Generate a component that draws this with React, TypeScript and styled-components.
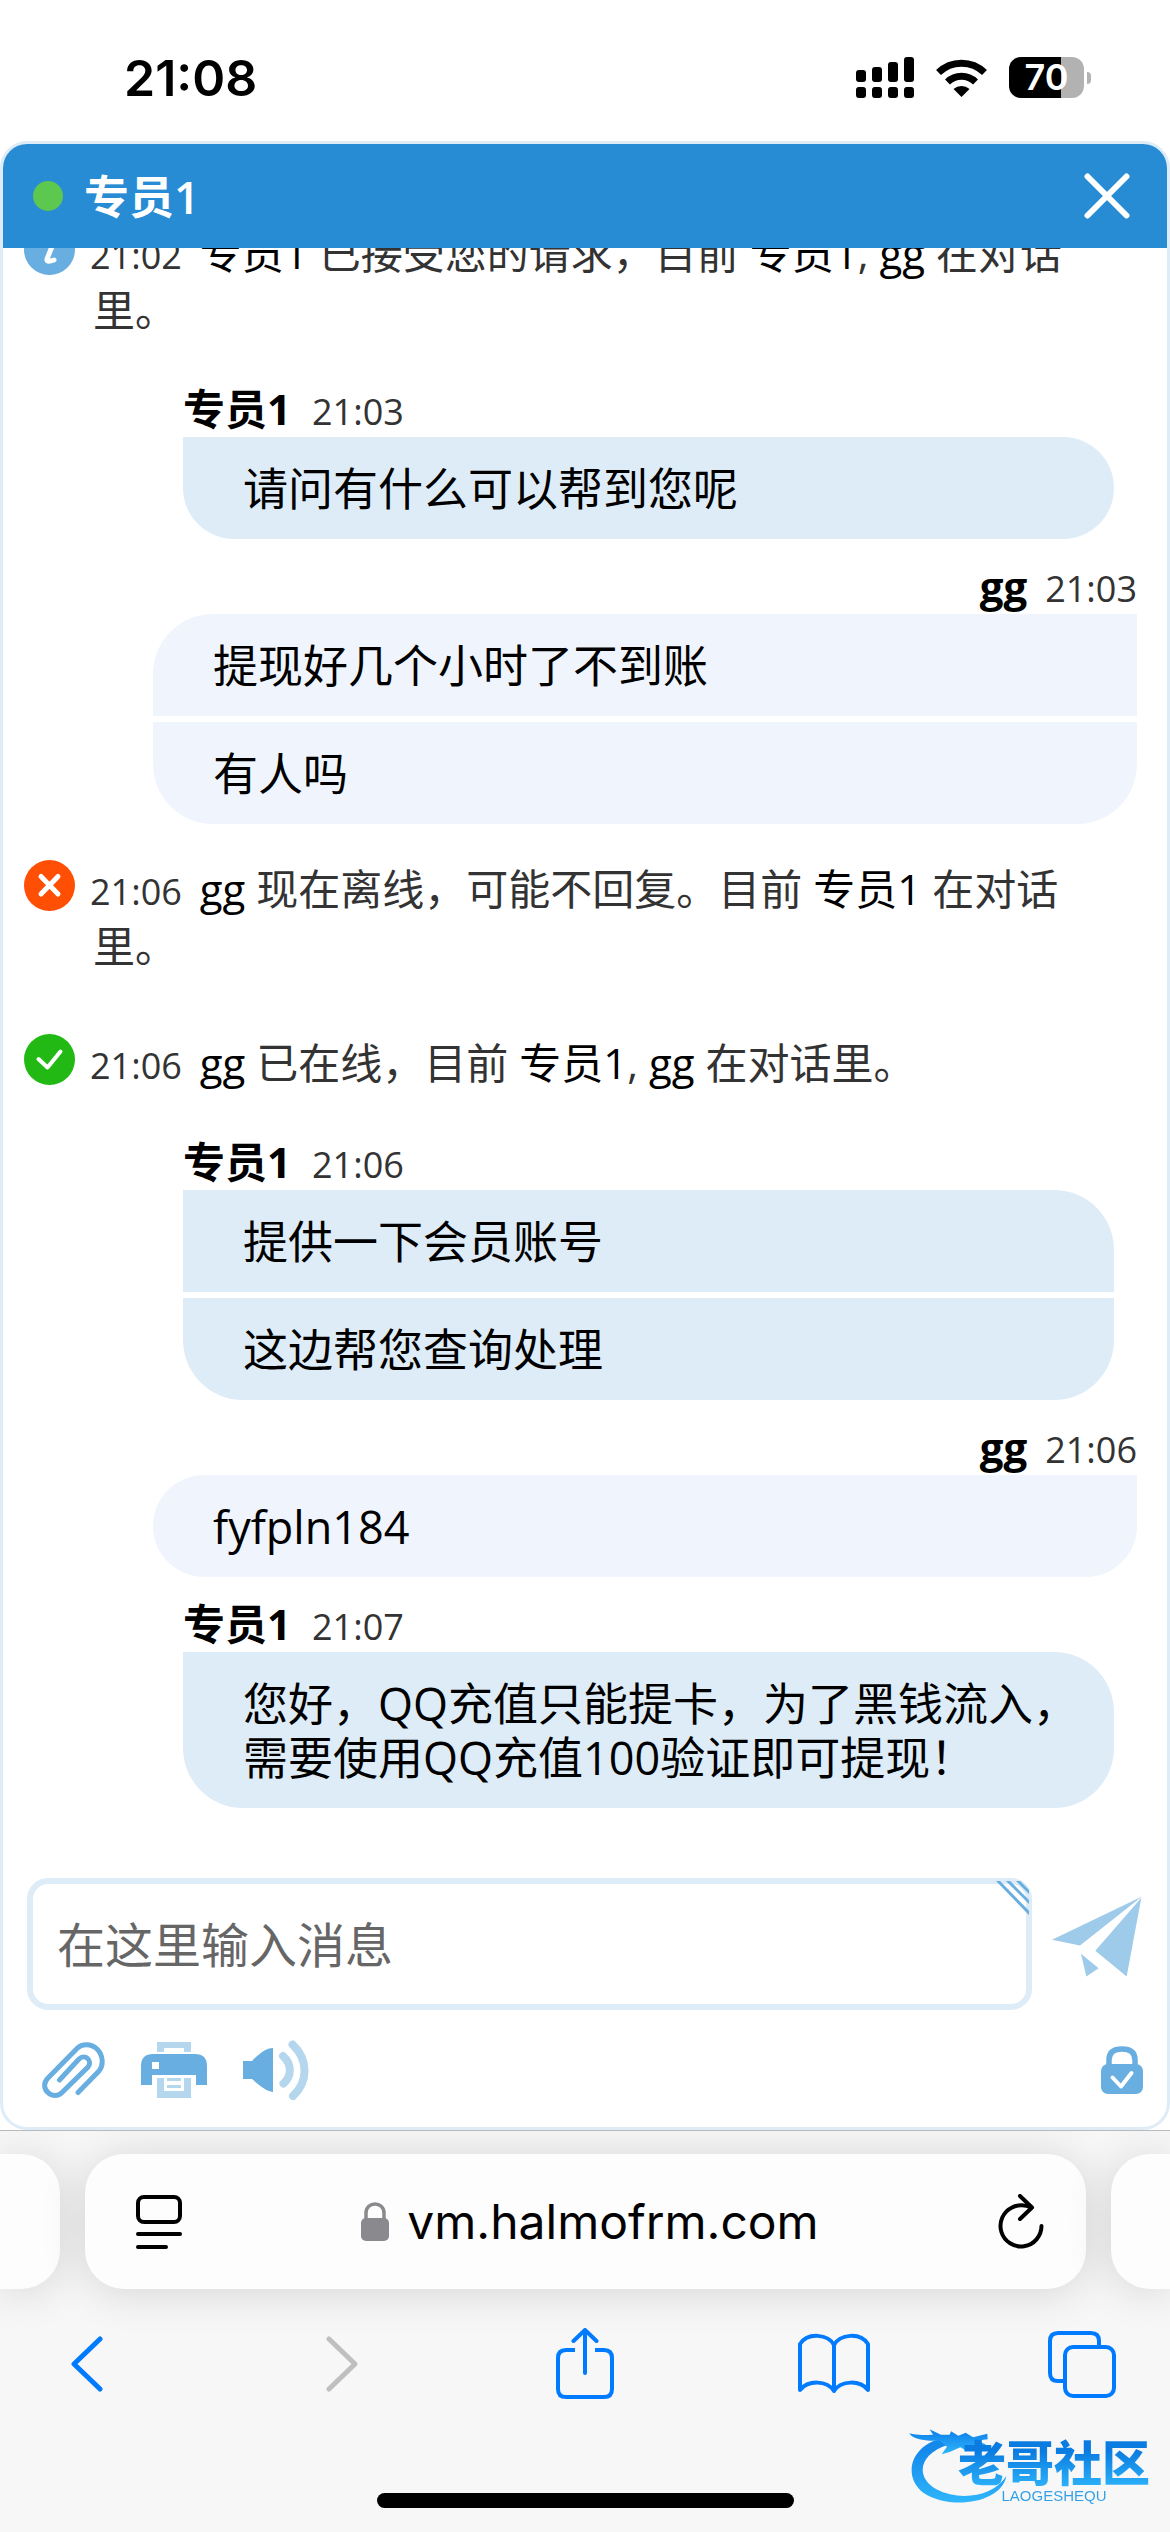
import React from "react";
import styled, { createGlobalStyle } from "styled-components";

const chatFont = `"Open Sans", "Noto Sans CJK SC", sans-serif`;
const systemFont = `Inter, "Noto Sans CJK SC", sans-serif`;

const GlobalStyle = createGlobalStyle`
  *, *::before, *::after { box-sizing: border-box; }
  body { margin: 0; background: #fff; font-family: ${chatFont}; }
  button, input { font: inherit; color: inherit; }
  svg { display: block; flex: none; }
`;

const Screen = styled.div`
  position: relative;
  display: flex;
  flex-direction: column;
  height: 100vh;
  overflow: hidden;
`;

/* Status bar */

const StatusBar = styled.header`
  display: flex;
  flex: none;
  align-items: center;
  justify-content: space-between;
  height: 141px;
  padding: 14px 79px 0 124px;
  font-family: ${systemFont};
`;

const Clock = styled.time`
  font-size: 50px;
  font-weight: 600;
  line-height: 60px;
`;

const StatusIcons = styled.div`
  display: flex;
  align-items: center;
  gap: 22px;
`;

const Battery = styled.div`
  display: flex;
  align-items: center;
  gap: 3px;
`;

const BatteryBody = styled.span<{ $level: number }>`
  width: 75px;
  border-radius: 12px;
  background: linear-gradient(90deg, #000 ${(p) => p.$level}%, #b2b2b2 ${(p) => p.$level}%);
  color: #fff;
  font-size: 36px;
  font-weight: 600;
  line-height: 41px;
  text-align: center;
`;

const BatteryTip = styled.span`
  width: 4px;
  height: 12px;
  border-radius: 0 6px 6px 0;
  background: #b2b2b2;
`;

/* Chat window */

const ChatWindow = styled.main`
  display: flex;
  flex: 1;
  flex-direction: column;
  min-height: 0;
  overflow: hidden;
  border: 3px solid #deecf7;
  border-radius: 27px;
  background: #fff;
`;

const ChatHeader = styled.div`
  display: flex;
  flex: none;
  align-items: center;
  gap: 21px;
  height: 104px;
  padding: 0 30px;
  background: #288cd4;
  color: #fff;
`;

const OnlineDot = styled.span`
  width: 30px;
  height: 30px;
  border-radius: 50%;
  background: #5cc850;
`;

const AgentTitle = styled.h1`
  flex: 1;
  margin: 0;
  font-size: 45px;
  font-weight: 600;
  line-height: 57px;
`;

const IconButton = styled.button`
  display: flex;
  flex: none;
  align-items: center;
  justify-content: center;
  padding: 0;
  border: 0;
  background: none;
  cursor: pointer;
`;

const CloseButton = styled(IconButton)`
  width: 60px;
  height: 60px;
`;

const Log = styled.section`
  display: flex;
  flex: 1;
  flex-direction: column;
  justify-content: flex-end;
  min-height: 0;
  overflow: hidden;
  padding-bottom: 34px;
`;

const SystemRow = styled.div`
  display: flex;
  flex: none;
  gap: 18px;
  margin: 18px 0 42px;
  padding: 0 90px 0 21px;
`;

const SystemText = styled.p`
  margin: 0;
  color: #333;
  font-size: 42px;
  line-height: 57px;
  text-indent: -3px;
`;

const Name = styled.span`
  color: #000;
`;

const Time = styled.time`
  color: #333;
  font-size: 36px;
  line-height: 36px;
`;

const SystemTime = styled(Time)`
  margin-right: 18px;
`;

const Group = styled.article<{ $own?: boolean }>`
  display: flex;
  flex: none;
  flex-direction: column;
  margin: ${(p) => (p.$own ? "0 30px 18px 150px" : "0 53px 18px 180px")};
`;

const GroupHead = styled.div<{ $own?: boolean }>`
  display: flex;
  align-items: baseline;
  justify-content: ${(p) => (p.$own ? "flex-end" : "flex-start")};
  gap: ${(p) => (p.$own ? 18 : 21)}px;
  height: 57px;
  font-size: 42px;
  line-height: 57px;
`;

const Sender = styled.strong`
  color: #000;
  font-weight: 700;
`;

const Bubbles = styled.div<{ $own?: boolean }>`
  display: flex;
  flex-direction: column;
  gap: 6px;

  > p {
    background: ${(p) => (p.$own ? "#f0f5fd" : "#deecf7")};
  }
  > p:first-child {
    ${(p) => (p.$own ? "border-top-left-radius" : "border-top-right-radius")}: 60px;
  }
  > p:last-child {
    border-bottom-left-radius: 60px;
    border-bottom-right-radius: 60px;
  }
`;

const Bubble = styled.p`
  margin: 0;
  padding: 25px 34px 23px 60px;
  color: #000;
  font-size: 45px;
  line-height: 54px;
`;

/* Composer */

const Composer = styled.form`
  flex: none;
  padding: 18px 24px 24px;
`;

const ComposeRow = styled.div`
  display: flex;
  align-items: flex-start;
  gap: 18px;
`;

const Field = styled.label`
  position: relative;
  display: block;
  flex: 1;
`;

const MessageInput = styled.input`
  display: block;
  width: 100%;
  height: 132px;
  padding: 0 24px;
  border: 6px solid #deecf7;
  border-radius: 21px;
  outline: 0;
  background: #fff;
  font-size: 48px;

  &::placeholder {
    color: #666;
    opacity: 1;
  }
`;

const Grip = styled.svg`
  position: absolute;
  top: 3px;
  right: 3px;
`;

const SendButton = styled(IconButton)`
  width: 93px;
  height: 117px;
`;

const Tools = styled.div`
  display: flex;
  align-items: center;
  gap: 36px;
  height: 66px;
  margin-top: 27px;
  padding-left: 15px;
`;

const SecureButton = styled(IconButton)`
  margin-left: auto;
`;

/* Browser chrome */

const Browser = styled.footer`
  flex: none;
  overflow: hidden;
  padding-bottom: 24px;
  border-top: 1px solid #b9b9bb;
  background: #f7f7f7;
  font-family: ${systemFont};
`;

const TabStrip = styled.div`
  display: flex;
  gap: 25px;
  margin-top: 23px;
`;

const Tab = styled.div`
  height: 135px;
  background: #fdfdfd;
  box-shadow: 0 3px 45px rgba(0, 0, 0, 0.14);
`;

const PreviousTab = styled(Tab)`
  width: 60px;
  border-radius: 0 39px 39px 0;
`;

const NextTab = styled(Tab)`
  width: 59px;
  border-radius: 39px 0 0 39px;
`;

const AddressBar = styled(Tab)`
  display: flex;
  flex: 1;
  align-items: center;
  padding: 0 42px 0 51px;
  border-radius: 39px;
`;

const Address = styled.button`
  display: flex;
  flex: 1;
  align-items: center;
  justify-content: center;
  gap: 18px;
  padding: 0;
  border: 0;
  background: none;
  font-size: 48px;
  line-height: 60px;
`;

const NavRow = styled.nav`
  display: flex;
  justify-content: space-between;
  margin-top: 27px;
  padding: 0 40px;
`;

const NavButton = styled(IconButton)`
  width: 96px;
  height: 96px;
`;

const HomeIndicator = styled.div`
  width: 417px;
  height: 15px;
  margin: 81px auto 0;
  border-radius: 8px;
  background: #000;
`;

const Watermark = styled.div`
  position: absolute;
  right: 20px;
  bottom: 24px;
  display: flex;
  align-items: flex-start;
  width: 241px;
  height: 86px;
`;

const WatermarkText = styled.div`
  position: absolute;
  right: 0;
  bottom: 0;
  display: flex;
  flex-direction: column;
  align-items: center;
  background: linear-gradient(180deg, #0a7be0 20%, #2fb6fb 75%, #2f9fe8 76%);
  background-clip: text;
  -webkit-background-clip: text;
  color: transparent;
`;

const WatermarkName = styled.span`
  font-family: "Noto Sans CJK SC", sans-serif;
  font-size: 48px;
  font-weight: 900;
  line-height: 48px;
`;

const WatermarkLatin = styled.span`
  font-family: "Liberation Sans", sans-serif;
  font-size: 15px;
  line-height: 24px;
`;

/* Drawings */

const SignalIcon = () => (
  <svg width="58" height="41" viewBox="0 0 58 41">
    <rect x="0" y="13" width="10" height="12" rx="3" />
    <rect x="16" y="10" width="10" height="15" rx="3" />
    <rect x="32" y="5" width="10" height="20" rx="3" />
    <rect x="48" y="0" width="10" height="25" rx="3" />
    {[0, 16, 32, 48].map((x) => (
      <rect key={x} x={x} y="30" width="10" height="11" rx="3" />
    ))}
  </svg>
);

const WifiIcon = () => (
  <svg width="51" height="38" viewBox="0 0 51 38">
    <g fill="none" stroke="#000" strokeWidth="7">
      <path d="M2.500 13.500A33 33 0 0 1 48.500 13.500" />
      <path d="M11.500 23A20 20 0 0 1 39.500 23" />
    </g>
    <path d="M25.500 38 17.500 30A12 12 0 0 1 33.500 30Z" />
  </svg>
);

const CloseIcon = () => (
  <svg width="46" height="46" viewBox="0 0 46 46" fill="none" stroke="#fff" strokeWidth="6" strokeLinecap="round">
    <path d="M3.500 3.500 42.500 42.500M42.500 3.500 3.500 42.500" />
  </svg>
);

type Status = "info" | "offline" | "online";

const statusColor: Record<Status, string> = {
  info: "#69aee0",
  offline: "#ff4f05",
  online: "#22b914",
};

const StatusIcon = ({ status }: { status: Status }) => (
  <svg width="51" height="51" viewBox="0 0 51 51">
    <circle cx="25.500" cy="25.500" r="25.500" fill={statusColor[status]} />
    <g fill="none" stroke="#fff" strokeWidth="5" strokeLinecap="round" strokeLinejoin="round">
      {status === "info" && (
        <>
          <path d="M22 20H29L23 35Q22 39 30 36" />
          <path d="M30 11v1" />
        </>
      )}
      {status === "offline" && <path d="M17 16.500 34 34M34 16.500 17 34" />}
      {status === "online" && <path d="M14.500 25 23.500 33.500 36.500 17.500" strokeWidth="4" />}
    </g>
  </svg>
);

const PlaneIcon = () => (
  <svg width="90" height="81" viewBox="0 0 270 240" fill="#9fcbea">
    <path d="M0 130 270 0 84 147Z" />
    <path d="M268 4 130 163 224 240Z" />
    <path d="M87 172 140 215 103 240Z" />
  </svg>
);

const ClipIcon = () => (
  <svg width="63" height="57" viewBox="0 0 63 57" fill="none" stroke="#69aee0" strokeWidth="5" strokeLinecap="round">
    <path d="M36 50.500 57 29C62 23 61 13 55 7 49 1.500 40 1.500 35 6.500L6 36C1 41 2 47 6 50.500 10 54.500 16 54.500 20 50.500L46 25C51 19 43 11 37 17L17.500 38" />
  </svg>
);

const PrinterIcon = () => (
  <svg width="66" height="57" viewBox="0 0 66 57">
    <g fill="#b5d7ee">
      <path d="M16 0H50V10H43V6H23V10H16Z" />
      <path d="M16 36H23V49H43V36H50V56H16Z" />
      <path d="M26 36H40V39H26ZM26 43H40V46H26Z" />
    </g>
    <path
      fill="#69aee0"
      fillRule="evenodd"
      d="M0 43V24Q0 12 12 12H54Q66 12 66 24V43H55V33H11V43ZM11 20V27H18V20Z"
    />
  </svg>
);

const SpeakerIcon = () => (
  <svg width="66" height="60" viewBox="0 0 66 60">
    <path fill="#69aee0" d="M0 21H9C17 13 23 8 30 8V52C23 51 17 46 9 39H0Z" />
    <g fill="none" stroke="#b5d7ee" strokeWidth="8" strokeLinecap="round">
      <path d="M40 16C49 24 49 36 40.500 43.500" />
      <path d="M49.500 4.500C66 20 65 42 50 56" />
    </g>
  </svg>
);

const SecureIcon = () => (
  <svg width="42" height="48" viewBox="0 0 42 48" fill="none" strokeLinecap="round" strokeLinejoin="round">
    <path d="M8 20V14C8 6 13 3 21 3S34 6 34 14V20" stroke="#69aee0" strokeWidth="5.500" />
    <rect y="18" width="42" height="30" rx="7" fill="#69aee0" />
    <path d="M11.500 31.500 20 40.500 30.500 27" stroke="#fff" strokeWidth="4" />
  </svg>
);

const ReaderIcon = () => (
  <svg width="46" height="54" viewBox="0 0 46 54" fill="none" stroke="#000" strokeWidth="4" strokeLinecap="round">
    <rect x="2" y="2" width="42" height="25" rx="6" />
    <path d="M2 39H44M2 52H30" />
  </svg>
);

const PadlockIcon = () => (
  <svg width="28" height="40" viewBox="0 0 28 40">
    <rect y="16" width="28" height="23" rx="5" fill="#8a8a8e" />
    <path d="M5 18V11C5 -1 23 -1 23 11V18" fill="none" stroke="#8a8a8e" strokeWidth="3.500" />
  </svg>
);

const ReloadIcon = () => (
  <svg width="46" height="56" viewBox="0 0 46 56" fill="none" stroke="#000" strokeWidth="4" strokeLinecap="round" strokeLinejoin="round">
    <path d="M33 13.500C28 11 20 10 14 13.500A20.500 20.500 0 1 0 43.500 32" />
    <path d="M22 2 34 13.500 22 25" />
  </svg>
);

const BackIcon = () => (
  <svg width="34" height="56" viewBox="0 0 34 56" fill="none" stroke="#007aff" strokeWidth="5" strokeLinecap="round" strokeLinejoin="round">
    <path d="M29 3 3 28 29 53" />
  </svg>
);

const ForwardIcon = () => (
  <svg width="44" height="56" viewBox="0 0 44 56" fill="none" stroke="#bfbfbf" strokeWidth="5" strokeLinecap="round" strokeLinejoin="round">
    <path d="M14 3 40 28 14 53" />
  </svg>
);

const ShareIcon = () => (
  <svg width="58" height="72" viewBox="0 0 58 72" fill="none" stroke="#007aff" strokeWidth="4" strokeLinecap="round" strokeLinejoin="round">
    <path d="M19 22H10Q2 22 2 30V61Q2 69 10 69H48Q56 69 56 61V30Q56 22 48 22H39" strokeLinecap="butt" />
    <path d="M29 45V2M17.500 13 29 2 40.500 13" />
  </svg>
);

const BookIcon = () => (
  <svg width="72" height="62" viewBox="0 0 72 62" fill="none" stroke="#007aff" strokeWidth="4" strokeLinejoin="round">
    <path d="M36 12C30 1 10 -1 2 11V57C10 47 29 47 36 58ZM36 12C42 1 62 -1 70 11V57C62 47 43 47 36 58Z" />
  </svg>
);

const TabsIcon = () => (
  <svg width="68" height="67" viewBox="0 0 68 67" fill="none" stroke="#007aff" strokeWidth="4">
    <path d="M51 15V10Q51 2 43 2H10Q2 2 2 10V42Q2 50 10 50H16" />
    <rect x="17" y="16" width="49" height="49" rx="8" />
  </svg>
);

const DragonIcon = () => (
  <svg width="98" height="82" viewBox="148 60 294 246">
    <defs>
      <linearGradient id="dragon" x1="0" y1="0" x2="0" y2="1">
        <stop offset="0.200" stopColor="#1389ec" />
        <stop offset="1" stopColor="#2fb6fb" />
      </linearGradient>
    </defs>
    <g fill="url(#dragon)">
      <path d="M250 108C150 130 128 225 192 273 270 325 425 305 440 222 400 285 300 298 230 262 165 225 178 155 265 128Z" />
      <path d="M149 94C175 102 200 98 220 98L210 82 244 98 270 98 274 88 296 101 318 92 340 106 383 95 384 112 350 116 378 127 372 142 335 130 318 145 302 136 270 150 246 157 262 134 240 116C200 118 160 114 149 94Z" />
    </g>
  </svg>
);

/* Conversation */

type Part = string | { name: string };
type Entry =
  | { kind: "system"; status: Status; time: string; parts: Part[] }
  | { kind: "group"; own?: boolean; sender: string; time: string; lines: string[] };

const entries: Entry[] = [
  {
    kind: "system",
    status: "info",
    time: "21:02",
    parts: [{ name: "专员1" }, " 已接受您的请求，目前 ", { name: "专员1" }, ", ", { name: "gg" }, " 在对话里。"],
  },
  { kind: "group", sender: "专员1", time: "21:03", lines: ["请问有什么可以帮到您呢"] },
  { kind: "group", own: true, sender: "gg", time: "21:03", lines: ["提现好几个小时了不到账", "有人吗"] },
  {
    kind: "system",
    status: "offline",
    time: "21:06",
    parts: [{ name: "gg" }, " 现在离线，可能不回复。目前 ", { name: "专员1" }, " 在对话里。"],
  },
  {
    kind: "system",
    status: "online",
    time: "21:06",
    parts: [{ name: "gg" }, " 已在线，目前 ", { name: "专员1" }, ", ", { name: "gg" }, " 在对话里。"],
  },
  { kind: "group", sender: "专员1", time: "21:06", lines: ["提供一下会员账号", "这边帮您查询处理"] },
  { kind: "group", own: true, sender: "gg", time: "21:06", lines: ["fyfpln184"] },
  {
    kind: "group",
    sender: "专员1",
    time: "21:07",
    lines: ["您好，QQ充值只能提卡，为了黑钱流入，需要使用QQ充值100验证即可提现！"],
  },
];

const LogEntry = ({ entry }: { entry: Entry }) => {
  if (entry.kind === "system") {
    return (
      <SystemRow>
        <StatusIcon status={entry.status} />
        <SystemText>
          <SystemTime>{entry.time}</SystemTime>
          {entry.parts.map((part, i) => (typeof part === "string" ? part : <Name key={i}>{part.name}</Name>))}
        </SystemText>
      </SystemRow>
    );
  }
  return (
    <Group $own={entry.own}>
      <GroupHead $own={entry.own}>
        <Sender>{entry.sender}</Sender>
        <Time>{entry.time}</Time>
      </GroupHead>
      <Bubbles $own={entry.own}>
        {entry.lines.map((line) => (
          <Bubble key={line}>{line}</Bubble>
        ))}
      </Bubbles>
    </Group>
  );
};

export default function App() {
  return (
    <>
      <GlobalStyle />
      <Screen>
        <StatusBar>
          <Clock>21:08</Clock>
          <StatusIcons>
            <SignalIcon />
            <WifiIcon />
            <Battery>
              <BatteryBody $level={70}>70</BatteryBody>
              <BatteryTip />
            </Battery>
          </StatusIcons>
        </StatusBar>

        <ChatWindow>
          <ChatHeader>
            <OnlineDot />
            <AgentTitle>专员1</AgentTitle>
            <CloseButton type="button" aria-label="关闭">
              <CloseIcon />
            </CloseButton>
          </ChatHeader>

          <Log>
            {entries.map((entry, i) => (
              <LogEntry key={i} entry={entry} />
            ))}
          </Log>

          <Composer onSubmit={(e) => e.preventDefault()}>
            <ComposeRow>
              <Field>
                <MessageInput type="text" aria-label="在这里输入消息" placeholder="在这里输入消息" />
                <Grip width="33" height="34" viewBox="0 0 33 34" fill="none" stroke="#69aee0" strokeWidth="3">
                  <path d="M1 -1 34 33M11 -1 34 22M21 -1 34 12" />
                </Grip>
              </Field>
              <SendButton type="submit" aria-label="发送">
                <PlaneIcon />
              </SendButton>
            </ComposeRow>
            <Tools>
              <IconButton type="button" aria-label="附件">
                <ClipIcon />
              </IconButton>
              <IconButton type="button" aria-label="打印">
                <PrinterIcon />
              </IconButton>
              <IconButton type="button" aria-label="声音">
                <SpeakerIcon />
              </IconButton>
              <SecureButton type="button" aria-label="安全">
                <SecureIcon />
              </SecureButton>
            </Tools>
          </Composer>
        </ChatWindow>

        <Browser>
          <TabStrip>
            <PreviousTab />
            <AddressBar>
              <IconButton type="button" aria-label="页面菜单">
                <ReaderIcon />
              </IconButton>
              <Address type="button">
                <PadlockIcon />
                vm.halmofrm.com
              </Address>
              <IconButton type="button" aria-label="重新载入">
                <ReloadIcon />
              </IconButton>
            </AddressBar>
            <NextTab />
          </TabStrip>
          <NavRow>
            <NavButton type="button" aria-label="后退">
              <BackIcon />
            </NavButton>
            <NavButton type="button" aria-label="前进" disabled>
              <ForwardIcon />
            </NavButton>
            <NavButton type="button" aria-label="共享">
              <ShareIcon />
            </NavButton>
            <NavButton type="button" aria-label="书签">
              <BookIcon />
            </NavButton>
            <NavButton type="button" aria-label="标签页">
              <TabsIcon />
            </NavButton>
          </NavRow>
          <HomeIndicator />
        </Browser>

        <Watermark>
          <DragonIcon />
          <WatermarkText>
            <WatermarkName>老哥社区</WatermarkName>
            <WatermarkLatin>LAOGESHEQU</WatermarkLatin>
          </WatermarkText>
        </Watermark>
      </Screen>
    </>
  );
}
